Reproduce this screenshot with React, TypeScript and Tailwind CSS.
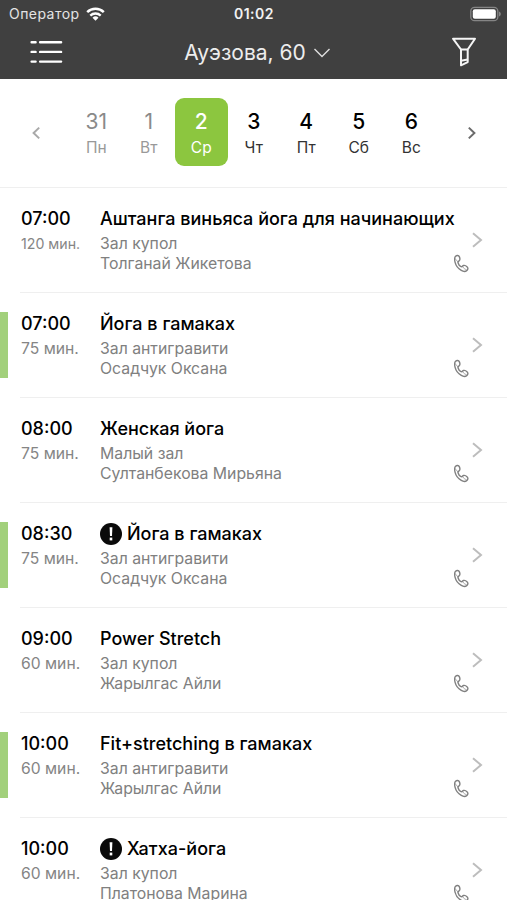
import { clsx } from "clsx";

interface Day {
  date: string;
  label: string;
  state: "past" | "active" | "next";
}

interface Lesson {
  time: string;
  duration: string;
  title: string;
  hall: string;
  trainer: string;
  marked?: boolean;
  alert?: boolean;
}

const days: Day[] = [
  { date: "31", label: "Пн", state: "past" },
  { date: "1", label: "Вт", state: "past" },
  { date: "2", label: "Ср", state: "active" },
  { date: "3", label: "Чт", state: "next" },
  { date: "4", label: "Пт", state: "next" },
  { date: "5", label: "Сб", state: "next" },
  { date: "6", label: "Вс", state: "next" },
];

const lessons: Lesson[] = [
  {
    time: "07:00",
    duration: "120 мин.",
    title: "Аштанга виньяса йога для начинающих",
    hall: "Зал купол",
    trainer: "Толганай Жикетова",
  },
  {
    time: "07:00",
    duration: "75 мин.",
    title: "Йога в гамаках",
    hall: "Зал антигравити",
    trainer: "Осадчук Оксана",
    marked: true,
  },
  {
    time: "08:00",
    duration: "75 мин.",
    title: "Женская йога",
    hall: "Малый зал",
    trainer: "Султанбекова Мирьяна",
  },
  {
    time: "08:30",
    duration: "75 мин.",
    title: "Йога в гамаках",
    hall: "Зал антигравити",
    trainer: "Осадчук Оксана",
    marked: true,
    alert: true,
  },
  {
    time: "09:00",
    duration: "60 мин.",
    title: "Power Stretch",
    hall: "Зал купол",
    trainer: "Жарылгас Айли",
  },
  {
    time: "10:00",
    duration: "60 мин.",
    title: "Fit+stretching в гамаках",
    hall: "Зал антигравити",
    trainer: "Жарылгас Айли",
    marked: true,
  },
  {
    time: "10:00",
    duration: "60 мин.",
    title: "Хатха-йога",
    hall: "Зал купол",
    trainer: "Платонова Марина",
    alert: true,
  },
];

export default function App() {
  return (
    <div className="flex h-[900px] w-[507px] flex-col overflow-hidden bg-white font-['Inter','Noto_Sans',sans-serif]">
      <Header />
      <WeekStrip />
      <main>
        {lessons.map((lesson, i) => (
          <LessonRow key={i} lesson={lesson} />
        ))}
      </main>
    </div>
  );
}

function Header() {
  return (
    <header className="h-[79px] shrink-0 bg-[#404040] text-white">
      <div className="grid h-7 grid-cols-3 items-center pl-[9px] pr-[6px] text-[14px] leading-7">
        <div className="flex items-center gap-[6px] pb-px">
          <span className="tracking-[0.45px] text-[#e4e4e4]">Оператор</span>
          <WifiIcon />
        </div>
        <span className="pb-px pr-[2px] text-center font-semibold tracking-[0.5px] text-[#f2f2f2]">
          01:02
        </span>
        <div className="flex justify-end pb-[2px]">
          <BatteryIcon />
        </div>
      </div>
      <div className="flex h-12 items-center justify-between px-[30px]">
        <button aria-label="Меню">
          <MenuIcon />
        </button>
        <button className="flex items-center gap-[7px] pl-px pt-px">
          <span className="text-[21px] leading-7 text-[#ededed]">
            Ауэзова, 60
          </span>
          <svg width="18" height="12" viewBox="0 0 18 12" fill="none">
            <path d="M1.5 2 9 9.5 16.5 2" stroke="#dedede" strokeWidth="1.4" />
          </svg>
        </button>
        <button aria-label="Фильтр">
          <FilterIcon />
        </button>
      </div>
    </header>
  );
}

function WeekStrip() {
  return (
    <nav className="flex h-[109px] shrink-0 items-center border-b border-[#efefef] pb-[2px]">
      <button
        className="flex w-[70px] justify-center pl-px pt-px"
        aria-label="Назад"
      >
        <svg width="10" height="14" viewBox="0 0 10 14" fill="none">
          <path d="M8.2 1.6 2.6 7l5.6 5.4" stroke="#a9a9a9" strokeWidth="2" />
        </svg>
      </button>
      <div className="flex">
        {days.map((day) => (
          <div
            key={day.date}
            className={clsx(
              "flex h-[68px] w-[52.5px] flex-col items-center rounded-[9px] pt-[10px]",
              day.state === "past" && "text-[#8a8a8a]",
              day.state === "active" && "bg-[#8cc63f] text-white",
              day.state === "next" && "text-black"
            )}
          >
            <span
              className={clsx(
                "text-[21px] leading-7",
                day.state === "past" ? "font-normal" : "font-medium"
              )}
            >
              {day.date}
            </span>
            <span
              className={clsx(
                "text-[15.5px] leading-6",
                day.state === "past" && "text-[#999999]",
                day.state === "next" && "text-[#333333]"
              )}
            >
              {day.label}
            </span>
          </div>
        ))}
      </div>
      <button
        className="flex w-[68px] justify-center pt-px"
        aria-label="Вперёд"
      >
        <svg width="10" height="14" viewBox="0 0 10 14" fill="none">
          <path d="M1.8 1.6 7.4 7l-5.6 5.4" stroke="#6b6b6b" strokeWidth="2" />
        </svg>
      </button>
    </nav>
  );
}

function LessonRow({ lesson }: { lesson: Lesson }) {
  return (
    <article className="flex h-[105px]">
      <div
        className={clsx(
          "mt-[19px] h-[66px] w-2 shrink-0",
          lesson.marked && "bg-[#a2d07b]"
        )}
      />
      <div className="ml-3 flex min-w-0 flex-1 border-b border-[#efefef] pl-px pt-[19px]">
        <div className="w-[79px] shrink-0">
          <p className="text-[18px] font-medium leading-6 text-black">
            {lesson.time}
          </p>
          <p
            className={clsx(
              "mt-[3px] leading-5 text-[#858585]",
              lesson.duration.length > 7 ? "text-[14.2px]" : "text-[15.7px]"
            )}
          >
            {lesson.duration}
          </p>
        </div>
        <div className="min-w-0 flex-1 whitespace-nowrap">
          <h3 className="flex items-center gap-[5px] text-[18px] font-medium leading-6 text-black">
            {lesson.alert && <AlertIcon />}
            {lesson.title}
          </h3>
          <p className="mt-[3px] text-[15.8px] leading-5 text-[#808080]">
            {lesson.hall}
          </p>
          <p className="text-[15.8px] leading-5 text-[#808080]">
            {lesson.trainer}
          </p>
        </div>
        <div className="mr-[24px] flex w-[30px] shrink-0 flex-col pt-[25px]">
          <svg
            className="self-end"
            width="12"
            height="16"
            viewBox="0 0 12 16"
            fill="none"
          >
            <path d="m2 1.2 8 6.8-8 6.8" stroke="#bdbdbd" strokeWidth="2" />
          </svg>
          <PhoneIcon />
        </div>
      </div>
    </article>
  );
}

function AlertIcon() {
  return (
    <svg width="22" height="22" viewBox="0 0 22 22" className="shrink-0">
      <circle cx="11" cy="11" r="11" fill="#0a0a0a" />
      <path d="M9.6 4.3h2.8l-.4 8.7h-2z" fill="#fff" />
      <rect x="9.7" y="14.6" width="2.6" height="2.8" fill="#fff" />
    </svg>
  );
}

function PhoneIcon() {
  return (
    <svg
      className="ml-px mt-[6px]"
      width="17"
      height="20"
      viewBox="1 0 17 20"
      fill="none"
      stroke="#808080"
      strokeWidth="1.4"
      strokeLinejoin="round"
    >
      <path d="M2.4 2.4C3.8 1 5.7 1.3 6.4 2.9c.6 1.4.7 3-.2 3.8-.8.7-1.5.9-1.2 2 .4 1.5 1.7 3.3 3.1 4 1 .4 1.3-.8 2.4-1.2 1.3-.4 2.6.3 3.7 1.4 1.1 1.1.8 2.5-.3 3.5-1.4 1.3-3.3 1.4-5.6 0C5.3 14.7 2.9 11.7 2.1 8.4 1.5 6 1.5 3.6 2.4 2.4Z" />
      <path
        d="M2.4 4.6c.4 1.2 1.4 2.3 2.8 3.2M9.6 12.8c1 1.5 2.3 2.4 3.9 2.9"
        strokeWidth=".7"
      />
    </svg>
  );
}

function MenuIcon() {
  return (
    <svg
      width="33"
      height="24"
      viewBox="0 0 33 24"
      fill="none"
      stroke="#fff"
      strokeWidth="2.4"
      strokeLinecap="round"
    >
      <path d="M1.6 2.2h4M10.1 2.2h21M1.6 11.9h4M10.1 11.9h21M1.6 21.6h4M10.1 21.6h21" />
    </svg>
  );
}

function FilterIcon() {
  return (
    <svg
      width="26"
      height="30"
      viewBox="0 0 26 30"
      fill="none"
      stroke="#f5f5f5"
      strokeWidth="2"
      strokeLinejoin="round"
    >
      <path d="M2 1.7h22L16.7 12.5v12.6L10 28.3V12.5Z" />
      <path d="M10 12.5h6.7M10 23.8l6.7-1.4" />
    </svg>
  );
}

function WifiIcon() {
  return (
    <svg width="19" height="14" viewBox="0 0 19 14" fill="none" stroke="#fff">
      <path d="M1.2 5.2a12 12 0 0 1 16.6 0" strokeWidth="2.5" />
      <path d="M4.3 8.6a7.5 7.5 0 0 1 10.4 0" strokeWidth="2.3" />
      <path d="m9.5 13.7-3-3a4.3 4.3 0 0 1 6 0z" fill="#fff" stroke="none" />
    </svg>
  );
}

function BatteryIcon() {
  return (
    <svg width="31" height="16" viewBox="0 0 31 16" fill="none">
      <rect
        x=".8"
        y="1.3"
        width="27"
        height="13.4"
        rx="3.8"
        stroke="#858585"
        strokeWidth="1.3"
      />
      <rect x="2.8" y="3.3" width="23" height="9.4" rx="2" fill="#fff" />
      <path d="M29 5.5c1.2.5 1.8 1.4 1.8 2.5s-.6 2-1.8 2.5z" fill="#858585" />
    </svg>
  );
}
